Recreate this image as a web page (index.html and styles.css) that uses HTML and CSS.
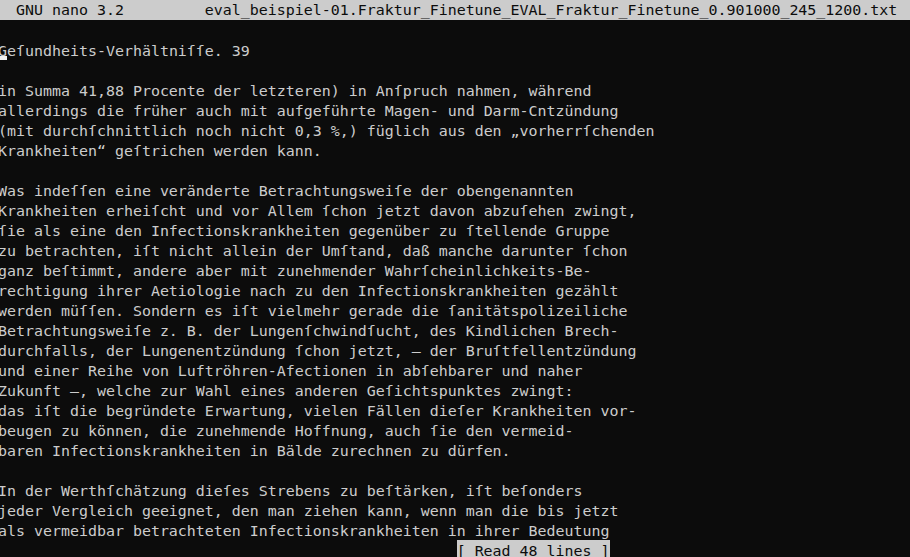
FILE: index.html
```html
<!DOCTYPE html>
<html lang="de">
<head>
<meta charset="utf-8">
<title>GNU nano 3.2</title>
<link rel="stylesheet" href="styles.css">
</head>
<body>
<div class="term">
<div class="row header"><span class="title">  GNU nano 3.2</span><span class="file">eval_beispiel-01.Fraktur_Finetune_EVAL_Fraktur_Finetune_0.901000_245_1200.txt</span></div>
<div class="row"> </div>
<div class="row"><span class="cursor">G</span>eſundheits-Verhältniſſe. 39</div>
<div class="row"> </div>
<div class="row">in Summa 41,88 Procente der letzteren) in Anſpruch nahmen, während</div>
<div class="row">allerdings die früher auch mit aufgeführte Magen- und Darm-Cntzündung</div>
<div class="row">(mit durchſchnittlich noch nicht 0,3 %,) füglich aus den „vorherrſchenden</div>
<div class="row">Krankheiten“ geſtrichen werden kann.</div>
<div class="row"> </div>
<div class="row">Was indeſſen eine veränderte Betrachtungsweiſe der obengenannten</div>
<div class="row">Krankheiten erheiſcht und vor Allem ſchon jetzt davon abzuſehen zwingt,</div>
<div class="row">ſie als eine den Infectionskrankheiten gegenüber zu ſtellende Gruppe</div>
<div class="row">zu betrachten, iſt nicht allein der Umſtand, daß manche darunter ſchon</div>
<div class="row">ganz beſtimmt, andere aber mit zunehmender Wahrſcheinlichkeits-Be-</div>
<div class="row">rechtigung ihrer Aetiologie nach zu den Infectionskrankheiten gezählt</div>
<div class="row">werden müſſen. Sondern es iſt vielmehr gerade die ſanitätspolizeiliche</div>
<div class="row">Betrachtungsweiſe z. B. der Lungenſchwindſucht, des Kindlichen Brech-</div>
<div class="row">durchfalls, der Lungenentzündung ſchon jetzt, — der Bruſtfellentzündung</div>
<div class="row">und einer Reihe von Luftröhren-Afectionen in abſehbarer und naher</div>
<div class="row">Zukunft —, welche zur Wahl eines anderen Geſichtspunktes zwingt:</div>
<div class="row">das iſt die begründete Erwartung, vielen Fällen dieſer Krankheiten vor-</div>
<div class="row">beugen zu können, die zunehmende Hoffnung, auch ſie den vermeid-</div>
<div class="row">baren Infectionskrankheiten in Bälde zurechnen zu dürfen.</div>
<div class="row"> </div>
<div class="row">In der Werthſchätzung dieſes Strebens zu beſtärken, iſt beſonders</div>
<div class="row">jeder Vergleich geeignet, den man ziehen kann, wenn man die bis jetzt</div>
<div class="row">als vermeidbar betrachteten Infectionskrankheiten in ihrer Bedeutung</div>
<div class="row status-row"><span class="status">[ Read 48 lines ]</span></div>
</div>
</body>
</html>
```
FILE: styles.css
```css
html, body {
  margin: 0;
  padding: 0;
  background: #0c0c0c;
  overflow: hidden;
}
.term {
  width: 912px;
  margin-left: -2px;
  font-family: "DejaVu Sans Mono", "Liberation Mono", monospace;
  font-size: 14.94px;
  color: #cccccc;
  background: #0c0c0c;
}
.row {
  height: 20px;
  line-height: 22px;
  white-space: pre;
  overflow: visible;
}
.header {
  background: #cccccc;
  color: #0c0c0c;
  display: flex;
  line-height: 21px;
}
.title {
  width: 23ch;
}
.cursor {
  display: inline-block;
  position: relative;
  line-height: 22px;
}
.cursor::after {
  content: "";
  position: absolute;
  left: 0;
  right: 0;
  bottom: 2px;
  height: 4px;
  background: #f2f2f2;
}
.status-row {
  padding-left: 51ch;
}
.status {
  display: inline-block;
  height: 20px;
  background: #cccccc;
  color: #0c0c0c;
}
```
